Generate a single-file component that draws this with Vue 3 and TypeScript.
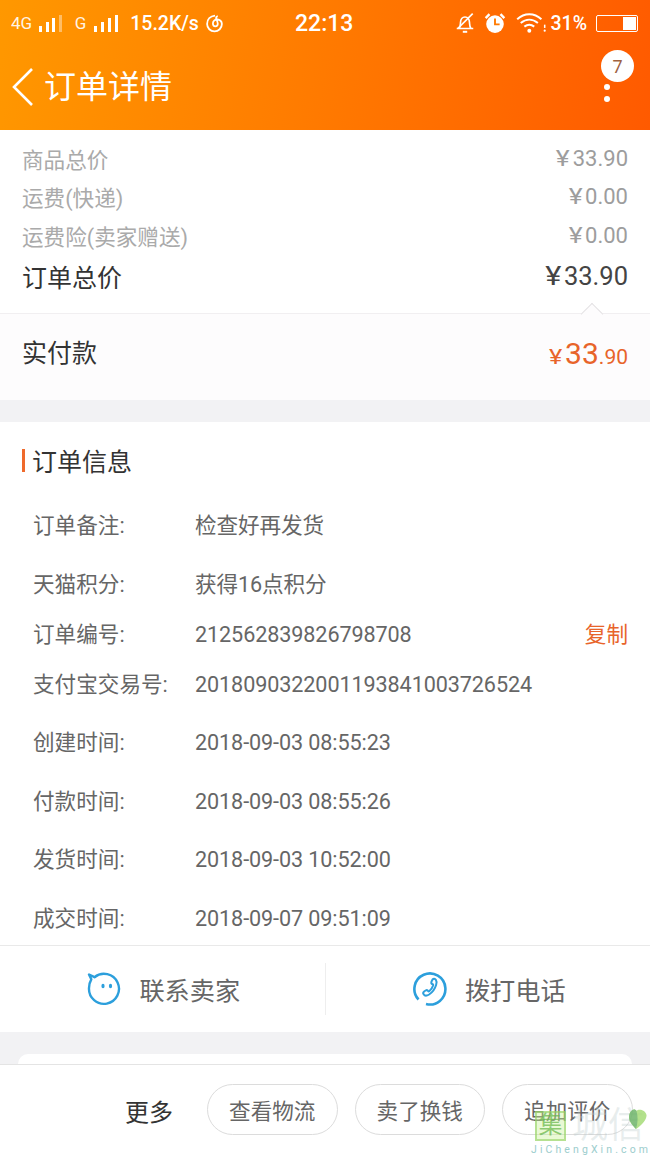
<script setup lang="ts">
const prices = [
  { label: '商品总价', value: '33.90' },
  { label: '运费(快递)', value: '0.00' },
  { label: '运费险(卖家赠送)', value: '0.00' },
]

const infoRows = [
  { label: '订单备注:', value: '检查好再发货', height: 58.5 },
  { label: '天猫积分:', value: '获得16点积分', height: 58.5 },
  { label: '订单编号:', value: '212562839826798708', height: 41.5, copy: true },
  { label: '支付宝交易号:', value: '2018090322001193841003726524', height: 58.5 },
  { label: '创建时间:', value: '2018-09-03 08:55:23', height: 58.5 },
  { label: '付款时间:', value: '2018-09-03 08:55:26', height: 58.5 },
  { label: '发货时间:', value: '2018-09-03 10:52:00', height: 58.5 },
  { label: '成交时间:', value: '2018-09-07 09:51:09', height: 58.5 },
]

const actions = ['查看物流', '卖了换钱', '追加评价']
</script>

<template>
  <div class="page">
    <header class="top">
      <div class="status">
        <div class="status-left">
          <span class="net">4G</span>
          <span class="bars tight"><i class="b1"></i><i class="b2"></i><i class="b3"></i><i class="b4 dim"></i></span>
          <span class="net net-g">G</span>
          <span class="bars"><i class="b1"></i><i class="b2"></i><i class="b3"></i><i class="b4"></i></span>
          <span class="speed">15.2K/s</span>
          <svg class="netease" width="19" height="19" viewBox="0 0 18 18" fill="none" stroke="#fff" stroke-width="1.7">
            <path d="M9.5 1.600C5 2 2 5 2 9.500a7 7 0 0 0 14 0c0-2.500-2-4.300-4.300-4.300-2.500 0-4.200 1.800-4.200 3.900 0 1.500 1 2.600 2.300 2.600 1.400 0 2.300-1 2.300-2.400 0-1.700-1-3.300-1.500-5.300-.2-1 .4-1.800 1.600-1.700" />
          </svg>
        </div>
        <span class="clock">22:13</span>
        <div class="status-right">
          <svg class="mute" width="22" height="22" viewBox="0 0 20 20" fill="none" stroke="#fff" stroke-width="1.500">
            <path d="M2.500 15h15M4.500 15c1.400-1.500 1.300-3.500 1.400-5.500C6 6.700 7.600 4.500 10 4.500s4 2.200 4.100 5c.1 2 0 4 1.400 5.500" />
            <path d="M8 18h4" stroke-width="1.800" />
            <path d="M17 1.500 3.500 15" />
          </svg>
          <svg class="alarm" width="22" height="22" viewBox="0 0 20 20">
            <circle cx="10" cy="11" r="8" fill="#fff" />
            <path d="M10 6v5.300h4.200" fill="none" stroke="#ff7a00" stroke-width="1.700" />
            <path d="M1.500 5.500 5 2M18.500 5.500 15 2" stroke="#fff" stroke-width="2.200" />
          </svg>
          <svg class="wifi" width="31" height="22" viewBox="0 0 28 20" fill="none" stroke="#fff" stroke-width="1.800">
            <path d="M1 6.500c6.500-6 15.500-6 22 0M4.200 10c4.800-4 10.800-4 15.600 0M7.500 13.300c2.800-2.200 6.200-2.200 9 0" />
            <circle cx="12" cy="17" r="1.800" fill="#fff" stroke="none" />
            <path d="M26 11.500v3" stroke-width="1.400" />
            <circle cx="26" cy="17" r="1" fill="#fff" stroke="none" />
          </svg>
          <span class="pct">31%</span>
          <span class="battery"><i></i></span>
        </div>
      </div>
      <div class="nav">
        <svg class="back" width="24" height="40" viewBox="0 0 24 40" fill="none" stroke="#fff" stroke-width="2.600">
          <path d="M21 2 3 20l18 18" />
        </svg>
        <h1 class="title">订单详情</h1>
        <div class="more">
          <span class="badge">7</span>
          <i class="dot"></i>
          <i class="dot"></i>
        </div>
      </div>
    </header>

    <section class="prices">
      <div v-for="p in prices" :key="p.label" class="price-row">
        <span>{{ p.label }}</span>
        <span class="price-value"><span class="cur">¥</span>{{ p.value }}</span>
      </div>
      <div class="price-row total">
        <span>订单总价</span>
        <span class="price-value"><span class="cur">¥</span>33.90</span>
      </div>
    </section>

    <section class="paid">
      <i class="notch"></i>
      <span class="paid-label">实付款</span>
      <span class="paid-value"><small class="yen">¥</small><b>33</b><small>.90</small></span>
    </section>

    <div class="band"></div>

    <section class="info">
      <h2 class="info-title">订单信息</h2>
      <div v-for="r in infoRows" :key="r.label" class="info-row" :style="{ height: r.height + 'px' }">
        <span class="info-label">{{ r.label }}</span>
        <span class="info-value">{{ r.value }}</span>
        <span v-if="r.copy" class="copy">复制</span>
      </div>
    </section>

    <section class="contact">
      <div class="contact-item">
        <svg width="36" height="36" viewBox="0 0 36 36" fill="none" stroke="#2c9fdc" stroke-width="2.400">
          <path d="M3 3.500 8.500 6.200A15 15 0 1 1 3 17c0-3.500.9-6.300 2.300-8.700Z" stroke-linejoin="round" />
          <ellipse cx="17" cy="15" rx="1.600" ry="2.300" fill="#2c9fdc" stroke="none" />
          <ellipse cx="24.500" cy="15" rx="1.600" ry="2.300" fill="#2c9fdc" stroke="none" />
        </svg>
        <span>联系卖家</span>
      </div>
      <div class="contact-item with-line">
        <svg width="36" height="36" viewBox="0 0 36 36" fill="none" stroke="#2c9fdc" stroke-width="2.600">
          <path d="M6.500 28.500A15.500 15.500 0 1 1 14 33" />
          <path d="M20.500 8.500c1-1 2.500-.9 3.400.3 1 1.400 1 2.600.2 5.200-1.200 4-3.600 7.300-7 9.500-2.300 1.400-4.500 1.300-5.500-.3-.7-1-.4-2 .5-2.700l1.500-1c1-.6 2-.4 2.600.6.300.4.600.4 1 .1 2-1.600 3.300-3.500 4-5.900.1-.5 0-.8-.5-1-1.100-.4-1.600-1.300-1.300-2.400Z" stroke-width="2" />
        </svg>
        <span>拨打电话</span>
      </div>
    </section>

    <div class="gap"><div class="card-edge"></div></div>

    <footer class="actions">
      <span class="more-label">更多</span>
      <button v-for="a in actions" :key="a" class="pill">{{ a }}</button>
    </footer>

    <div class="watermark">
      <div class="wm-top">
        <span class="wm-logo">集</span>
        <span class="wm-name">城信</span>
      </div>
      <svg class="wm-heart" width="20" height="22" viewBox="0 0 20 22">
        <path d="M8 21C2 15 0 11 1.500 6 3 1.500 7 0 8.500 3c2-2.500 9-1 10 4 .5 4-4 10-10.500 14Z" fill="#a6dc78" />
        <path d="M8 21C2 15 0 11 1.500 6 3 1.500 7 0 8.500 3 10 8 10 14 8 21Z" fill="#6fb56a" />
      </svg>
      <div class="wm-url">JiChengXin.com</div>
    </div>
  </div>
</template>

<style>
html,
body {
  margin: 0;
  background: #fff;
}
</style>

<style scoped>
.page {
  position: relative;
  width: 650px;
  height: 1155px;
  overflow: hidden;
  background: #fff;
  font-family: Roboto, "Noto Sans CJK SC", sans-serif;
  color: #333;
}

.top {
  height: 130px;
  background: linear-gradient(100deg, #ff9800 0%, #ff7a00 50%, #ff5a00 100%);
  color: #fff;
}

.status {
  height: 44px;
  box-sizing: border-box;
  padding: 2px 12px 0 11px;
  display: flex;
  align-items: center;
  justify-content: space-between;
  position: relative;
}

.status-left,
.status-right {
  display: flex;
  align-items: center;
}

.net {
  font-size: 17px;
  opacity: 0.9;
}

.net-g {
  margin-left: 13px;
}

.bars {
  display: inline-flex;
  align-items: flex-end;
  gap: 4px;
  height: 17px;
  margin-left: 8px;
}

.bars.tight {
  gap: 3.500px;
  margin-left: 7px;
}

.bars i {
  width: 3px;
  background: #fff;
  display: block;
}

.bars .b1 {
  height: 6px;
}

.bars .b2 {
  height: 10px;
}

.bars .b3 {
  height: 14px;
}

.bars .b4 {
  height: 17px;
}

.bars .dim {
  opacity: 0.4;
}

.speed {
  font-size: 19.500px;
  font-weight: 500;
  margin-left: 12px;
}

.netease {
  margin-left: 6px;
}

.clock {
  position: absolute;
  left: 295px;
  font-size: 23px;
  font-weight: 500;
}

.alarm {
  margin-left: 8px;
}

.wifi {
  margin-left: 10px;
}

.pct {
  font-size: 19.500px;
  font-weight: 500;
  margin-left: 3px;
}

.battery {
  width: 42px;
  height: 17px;
  margin-left: 9px;
  border: 1px solid #fff;
  border-radius: 2px;
  display: flex;
  justify-content: flex-end;
  padding: 1px;
  box-sizing: border-box;
}

.battery i {
  width: 13px;
  background: #fff;
  display: block;
}

.nav {
  height: 86px;
  display: flex;
  align-items: center;
  padding-left: 11px;
  position: relative;
}

.title {
  margin: 0 0 0 9px;
  font-size: 32px;
  font-weight: 400;
  line-height: 1;
}

.more {
  position: absolute;
  top: 6px;
  right: 16px;
  width: 33px;
  display: flex;
  flex-direction: column;
  align-items: center;
}

.badge {
  width: 33px;
  height: 32px;
  border-radius: 50%;
  background: #fff;
  color: #a0623f;
  font-size: 18px;
  display: flex;
  align-items: center;
  justify-content: center;
  margin-bottom: 2px;
  flex-shrink: 0;
}

.dot {
  width: 6px;
  height: 6px;
  border-radius: 50%;
  background: #fff;
  margin-top: 6px;
  margin-left: -22px;
}

.badge + .dot {
  margin-top: 0;
}

.prices {
  height: 184px;
  box-sizing: border-box;
  padding: 9px 22px 0 22px;
  border-bottom: 1px solid #f1eff1;
}

.price-row {
  height: 38.500px;
  display: flex;
  align-items: center;
  justify-content: space-between;
  font-size: 21.600px;
  color: #aaa;
}

.price-value {
  font-size: 22px;
  color: #9d9d9d;
  display: flex;
  align-items: center;
}

.cur {
  margin-right: 3px;
  transform: scaleX(1.200);
  transform-origin: right center;
}

.total {
  height: 43px;
  font-size: 25px;
  color: #333;
}

.total .price-value {
  font-size: 25.500px;
  color: #444;
}

.paid {
  position: relative;
  height: 86px;
  box-sizing: border-box;
  padding: 0 22px 12px;
  background: #fdfcfd;
  display: flex;
  align-items: center;
  justify-content: space-between;
}

.notch {
  position: absolute;
  top: -8px;
  right: 50px;
  width: 15px;
  height: 15px;
  background: #fdfcfd;
  border-top: 1px solid #e4e2e4;
  border-left: 1px solid #e4e2e4;
  transform: rotate(45deg);
}

.paid-label {
  font-size: 25px;
  color: #333;
}

.paid-value {
  color: #e8642a;
  display: flex;
  align-items: baseline;
  margin-top: 5px;
}

.paid-value b {
  font-size: 30px;
  font-weight: 400;
}

.paid-value small {
  font-size: 21px;
}

.paid-value .yen {
  font-size: 21px;
  margin-right: 4px;
  transform: scaleX(1.200);
}

.band {
  height: 22px;
  background: #f2f2f4;
}

.info {
  height: 524px;
  box-sizing: border-box;
  border-bottom: 1px solid #e9e9e9;
}

.info-title {
  margin: 0 0 0 22px;
  height: 75px;
  display: flex;
  align-items: center;
  font-size: 25px;
  font-weight: 400;
  color: #333;
  position: relative;
  padding-left: 10px;
}

.info-title::before {
  content: "";
  position: absolute;
  left: 0;
  top: 27px;
  width: 3px;
  height: 23px;
  background: #ef6a2c;
}

.info-row {
  display: flex;
  align-items: center;
  padding: 0 22px 0 33px;
  font-size: 21.600px;
  line-height: 30px;
  color: #666;
}

.info-label {
  width: 162px;
  flex-shrink: 0;
  white-space: nowrap;
}

.info-value {
  flex: 1;
  white-space: nowrap;
  letter-spacing: -0.100px;
}

.copy {
  color: #e8642a;
}

.contact {
  height: 86px;
  display: flex;
  align-items: center;
}

.contact-item {
  flex: 1;
  height: 52px;
  display: flex;
  align-items: center;
  justify-content: center;
  gap: 17px;
  padding-left: 2px;
  font-size: 25.200px;
  color: #666;
  box-sizing: border-box;
}

.with-line {
  border-left: 1px solid #eee;
}

.gap {
  height: 32px;
  background: #f2f2f4;
  box-sizing: border-box;
  padding: 22px 18px 0;
}

.card-edge {
  height: 10px;
  background: #fff;
  border-radius: 10px 10px 0 0;
}

.actions {
  height: 91px;
  box-sizing: border-box;
  border-top: 1px solid #e4e4e4;
  padding: 0 17.500px 0 0;
  background: #fff;
  display: flex;
  align-items: center;
  justify-content: flex-end;
  gap: 17px;
}

.more-label {
  font-size: 24px;
  color: #333;
  margin-right: 17px;
}

.pill {
  width: 130.500px;
  height: 51px;
  margin-top: -2px;
  border: 1px solid #dcdcdc;
  border-radius: 26px;
  background: #fff;
  color: #666;
  font: inherit;
  font-size: 21.600px;
  padding: 0;
}

.watermark {
  position: absolute;
  left: 531px;
  top: 1106px;
  width: 119px;
  height: 48px;
  pointer-events: none;
}

.wm-top {
  display: flex;
  align-items: center;
  padding-top: 4px;
}

.wm-logo {
  width: 31px;
  height: 30px;
  box-sizing: border-box;
  margin-left: 4px;
  background: rgba(200, 240, 150, 0.4);
  border: 2px solid rgba(140, 205, 90, 0.55);
  color: rgba(110, 185, 80, 0.75);
  font-size: 24px;
  line-height: 25px;
  text-align: center;
}

.wm-name {
  font-size: 36px;
  line-height: 32px;
  color: rgba(190, 205, 205, 0.35);
  margin-left: 6px;
  white-space: nowrap;
}

.wm-heart {
  position: absolute;
  left: 97px;
  top: 2px;
  opacity: 0.85;
}

.wm-url {
  font-size: 10.500px;
  line-height: 12px;
  letter-spacing: 3.100px;
  color: #9ccdcd;
  margin-top: 2px;
  white-space: nowrap;
}
</style>
